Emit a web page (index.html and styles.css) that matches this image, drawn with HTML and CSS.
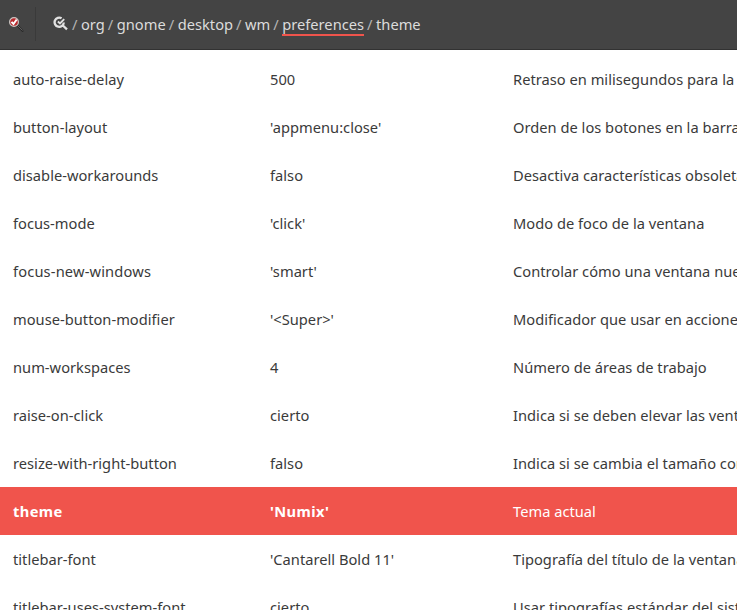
FILE: index.html
```
<!DOCTYPE html>
<html lang="es">
<head>
<meta charset="utf-8">
<title>dconf</title>
<link rel="stylesheet" href="styles.css">
</head>
<body>
<header class="bar">
  <svg class="app-icon" viewBox="0 0 16 16" width="16" height="16">
    <path d="M9.500 9.500L14.500 14.900" stroke="#292929" stroke-width="2" stroke-linecap="round"/>
    <path d="M9.500 9.500L14.500 14.500" stroke="#777" stroke-width=".7"/>
    <circle cx="6" cy="6" r="4.400" fill="#b9272b" stroke="#c9c5c2" stroke-width="1.200"/>
    <path d="M3.500 5.800L5.500 8L8.700 3.500" fill="none" stroke="#fff" stroke-width="2"/>
  </svg>
  <span class="divider"></span>
  <svg class="path-icon" viewBox="0 0 16 16" width="16" height="16">
    <path d="M8.600 2.300A4.600 4.600 0 1 0 10.800 6.500M9.300 9L14 13.300" fill="none" stroke="#e2e2e2" stroke-width="2.300"/>
    <path d="M4.900 5.500L7 7.400L11.200 3.200" fill="none" stroke="#e2e2e2" stroke-width="1.900"/>
  </svg>
  <nav class="path">
    <span class="sep">/</span><span>org</span><span class="sep">/</span><span>gnome</span><span class="sep">/</span><span>desktop</span><span class="sep">/</span><span>wm</span><span class="sep">/</span><span class="current">preferences</span><span class="sep">/</span><span>theme</span>
  </nav>
</header>
<main class="list">
  <div class="row"><span>auto-raise-delay</span><span>500</span><span>Retraso en milisegundos para la </span></div>
  <div class="row"><span>button-layout</span><span>'appmenu:close'</span><span>Orden de los botones en la barra</span></div>
  <div class="row"><span>disable-workarounds</span><span>falso</span><span>Desactiva características obsoletas</span></div>
  <div class="row"><span>focus-mode</span><span>'click'</span><span>Modo de foco de la ventana</span></div>
  <div class="row"><span class="wide">focus-new-windows</span><span>'smart'</span><span>Controlar cómo una ventana nueva</span></div>
  <div class="row"><span>mouse-button-modifier</span><span>'&lt;Super&gt;'</span><span>Modificador que usar en acciones</span></div>
  <div class="row"><span>num-workspaces</span><span>4</span><span>Número de áreas de trabajo</span></div>
  <div class="row"><span>raise-on-click</span><span>cierto</span><span>Indica si se deben elevar las ventanas</span></div>
  <div class="row"><span>resize-with-right-button</span><span>falso</span><span>Indica si se cambia el tamaño con</span></div>
  <div class="row selected"><span class="strong">theme</span><span class="strong">'Numix'</span><span>Tema actual</span></div>
  <div class="row"><span>titlebar-font</span><span>'Cantarell Bold 11'</span><span>Tipografía del título de la ventana</span></div>
  <div class="row"><span>titlebar-uses-system-font</span><span>cierto</span><span>Usar tipografías estándar del sistema</span></div>
</main>
</body>
</html>
```
FILE: styles.css
```
* { box-sizing: border-box; }

body {
  margin: 0;
  height: 610px;
  display: flex;
  flex-direction: column;
  overflow: hidden;
  background: #fff;
  color: #3a3a3a;
  font: 14.667px/20px "Noto Sans", sans-serif;
  white-space: nowrap;
}

.bar {
  flex: none;
  display: flex;
  height: 50px;
  padding-left: 8px;
  background: #444;
  border-bottom: 1px solid #323232;
  color: #dcdcdc;
}

.app-icon {
  flex: none;
  margin-top: 16px;
}

.divider {
  width: 1px;
  height: 34px;
  margin: 7px 17px 0 11px;
  background: #3a3a3a;
}

.path-icon {
  flex: none;
  margin-top: 16px;
}

.path {
  display: flex;
  height: 22px;
  margin: 14px 0 0 3px;
}

.sep {
  width: 9px;
  color: #b4b4b4;
}

.path span:not(.sep) {
  margin-right: 3px;
}

.path .current {
  height: 22px;
  border-bottom: 2px solid #f0544c;
}

.list {
  flex: none;
  padding-top: 5px;
}

.row {
  display: grid;
  grid-template-columns: 257px 243px 1fr;
  align-items: center;
  height: 48px;
  padding-left: 13px;
  overflow: hidden;
  letter-spacing: .015px;
}

.selected {
  background: #f0544c;
  color: #fff;
}

.wide {
  letter-spacing: .15px;
}

.strong {
  font-weight: 700;
  letter-spacing: .4px;
}
```
